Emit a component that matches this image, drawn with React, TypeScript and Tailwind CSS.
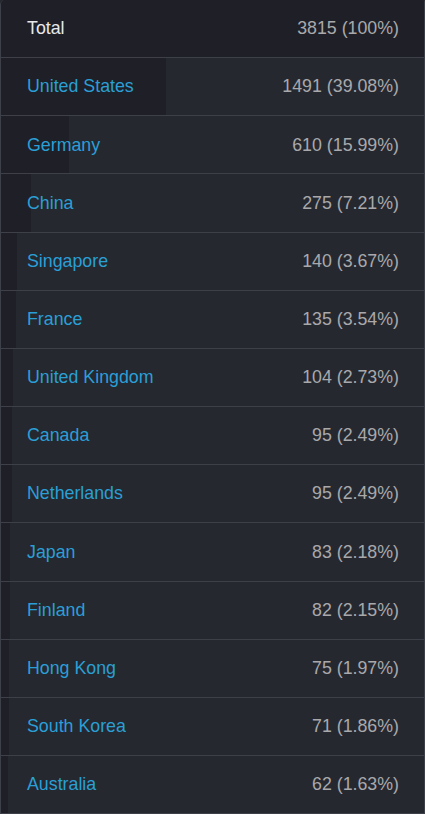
const rows = [
  { name: 'United States', count: 1491, pct: 39.08 },
  { name: 'Germany', count: 610, pct: 15.99 },
  { name: 'China', count: 275, pct: 7.21 },
  { name: 'Singapore', count: 140, pct: 3.67 },
  { name: 'France', count: 135, pct: 3.54 },
  { name: 'United Kingdom', count: 104, pct: 2.73 },
  { name: 'Canada', count: 95, pct: 2.49 },
  { name: 'Netherlands', count: 95, pct: 2.49 },
  { name: 'Japan', count: 83, pct: 2.18 },
  { name: 'Finland', count: 82, pct: 2.15 },
  { name: 'Hong Kong', count: 75, pct: 1.97 },
  { name: 'South Korea', count: 71, pct: 1.86 },
  { name: 'Australia', count: 62, pct: 1.63 },
];

function Row({ label, value, pct, total }: { label: string; value: string; pct: number; total?: boolean }) {
  return (
    <div className="relative h-[58.17px] border-b border-[#3e4049] bg-[#262830]">
      {/* share bar */}
      <div className="absolute left-0 top-0 bottom-0 bg-[#1f2027]" style={{ width: `${pct}%` }} />
      <div className="relative flex h-full items-center justify-between pl-[26px] pr-[25px] text-[17.8px]">
        <span className={total ? 'text-[#e8e8ea]' : 'text-[#2a9fd6]'}>{label}</span>
        <span className="text-[#a9a9ab]">{value}</span>
      </div>
    </div>
  );
}

export default function App() {
  return (
    <div className="h-[814px] overflow-hidden bg-[#262830]" style={{ fontFamily: '"Liberation Sans", Arial, sans-serif' }}>
      <div className="rounded-tl-[5px] rounded-tr-[2px] border-x border-[#3e4049] overflow-hidden">
        <Row label="Total" value="3815 (100%)" pct={100} total />
        {rows.map((r) => (
          <Row key={r.name} label={r.name} value={`${r.count} (${r.pct.toFixed(2)}%)`} pct={r.pct} />
        ))}
      </div>
    </div>
  );
}
